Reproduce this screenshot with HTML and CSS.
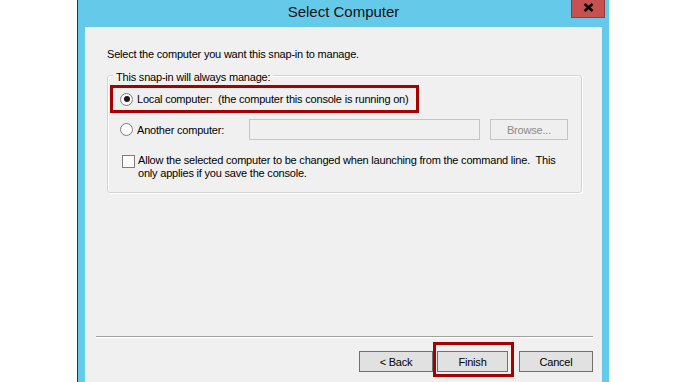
FILE: index.html
```html
<!DOCTYPE html>
<html lang="en">
<head>
<meta charset="utf-8">
<title>Select Computer</title>
<link rel="stylesheet" href="styles.css">
</head>
<body>
<div class="window">
  <div class="titlebar">
    <span class="title">Select Computer</span>
    <div class="close" aria-label="Close">
      <svg width="11" height="9" viewBox="0 0 11 9"><path d="M1.5 1 L9.5 8 M9.5 1 L1.5 8" stroke="#000" stroke-width="2.4" fill="none"/></svg>
    </div>
  </div>
  <div class="content">
    <p class="intro">Select the computer you want this snap-in to manage.</p>
    <fieldset class="group">
      <legend>This snap-in will always manage:</legend>
      <div class="option-local">
        <span class="radio checked"></span>
        <span class="label">Local computer:&nbsp; (the computer this console is running on)</span>
      </div>
      <div class="option-remote">
        <div class="radio-label">
          <span class="radio"></span>
          <span class="label">Another computer:</span>
        </div>
        <div class="textbox"></div>
        <div class="btn btn-browse">Browse...</div>
      </div>
      <div class="check-row">
        <span class="checkbox"></span>
        <span class="check-text">Allow the selected computer to be changed when launching from the command line.&nbsp; This<br>only applies if you save the console.</span>
      </div>
    </fieldset>
    <div class="separator"></div>
    <div class="buttons">
      <div class="btn btn-back">&lt; Back</div>
      <div class="btn btn-finish">Finish</div>
      <div class="btn btn-cancel">Cancel</div>
    </div>
  </div>
</div>
</body>
</html>
```

FILE: styles.css
```css
* { box-sizing: border-box; }
html, body { margin: 0; padding: 0; }
body {
  background: #ffffff;
  font-family: "Liberation Sans", Arial, sans-serif;
  font-size: 11px;
  letter-spacing: -0.2px;
  color: #000;
  height: 382px;
  overflow: hidden;
}
.window {
  margin-left: 77px;
  width: 532px;
  height: 382px;
  border-left: 1px solid #2e2e2e;
  background: #65c9ea;
  display: flex;
  flex-direction: column;
}
.titlebar {
  position: relative;
  height: 27px;
  text-align: center;
  flex: none;
}
.title {
  display: inline-block;
  font-size: 15px;
  letter-spacing: 0;
  line-height: 24px;
  color: #111;
}
.close {
  position: absolute;
  top: 0;
  right: 4px;
  width: 34px;
  height: 18px;
  background: #c75050;
  border: 1px solid #8e3b3b;
  border-top: none;
  display: flex;
  align-items: center;
  justify-content: center;
}
.close svg { display: block; margin-top: -2px; }
.content {
  flex: 1;
  margin: 0 7px;
  background: #f0f0f0;
  display: flex;
  flex-direction: column;
  padding: 20px 0 10px 0;
}
.intro {
  margin: 0 0 0 22px;
  line-height: 14px;
}
.group {
  margin: 5px 20px 0 22px;
  padding: 1px 10px 12px 2px;
  border: 1px solid #d5d5d5;
  border-radius: 3px;
  box-shadow: 1px 1px 0 #ffffff, inset 1px 1px 0 #ffffff;
  min-width: 0;
}
.group legend {
  margin-left: 3px;
  padding: 4px 3px 0 3px;
  line-height: 14px;
}
.option-local {
  width: 309px;
  height: 28px;
  border: 3px solid #a80000;
  display: flex;
  align-items: center;
  padding-left: 7px;
  white-space: nowrap;
}
.radio {
  flex: none;
  width: 13px;
  height: 13px;
  border-radius: 50%;
  border: 1px solid #7e7e7e;
  background: #fdfdfd;
  display: inline-flex;
  align-items: center;
  justify-content: center;
  margin-right: 4px;
}
.radio.checked::before {
  content: "";
  width: 6px;
  height: 6px;
  border-radius: 50%;
  background: #1a1a1a;
}
.option-remote {
  margin-top: 6px;
  height: 21px;
  display: flex;
  align-items: center;
  padding-left: 10px;
}
.radio-label {
  width: 129px;
  display: flex;
  align-items: center;
  white-space: nowrap;
}
.textbox {
  width: 231px;
  height: 21px;
  border: 1px solid #c5c5c5;
  background: #f0f0f0;
}
.btn {
  height: 21px;
  border: 1px solid #adadad;
  background: #e1e1e1;
  display: flex;
  align-items: center;
  justify-content: center;
  line-height: 14px;
  color: #000;
}
.btn-browse {
  margin-left: 10px;
  width: 78px;
  background: #efefef;
  border-color: #c4c4c4;
  color: #8a8a8a;
}
.check-row {
  margin-top: 14px;
  padding-left: 12px;
  display: flex;
  align-items: flex-start;
}
.checkbox {
  flex: none;
  width: 13px;
  height: 13px;
  margin-top: 1px;
  border: 1px solid #7e7e7e;
  background: #fdfdfd;
  margin-right: 3px;
}
.check-text {
  line-height: 13px;
  white-space: nowrap;
}
.separator {
  margin: auto 9px 0 11px;
  height: 2px;
  border-top: 1px solid #a0a0a0;
  border-bottom: 1px solid #ffffff;
}
.buttons {
  margin: 13px 9px 0 0;
  display: flex;
  justify-content: flex-end;
}
.btn-back, .btn-cancel {
  width: 74px;
  border-color: #707070;
}
.btn-finish {
  position: relative;
  width: 71px;
  margin-left: 4px;
  margin-right: 11px;
  border-color: #3c7fb1;
}
.btn-finish::after {
  content: "";
  position: absolute;
  top: -10px;
  left: -5px;
  right: -7px;
  bottom: -6px;
  border: 3px solid #a80000;
}
```
